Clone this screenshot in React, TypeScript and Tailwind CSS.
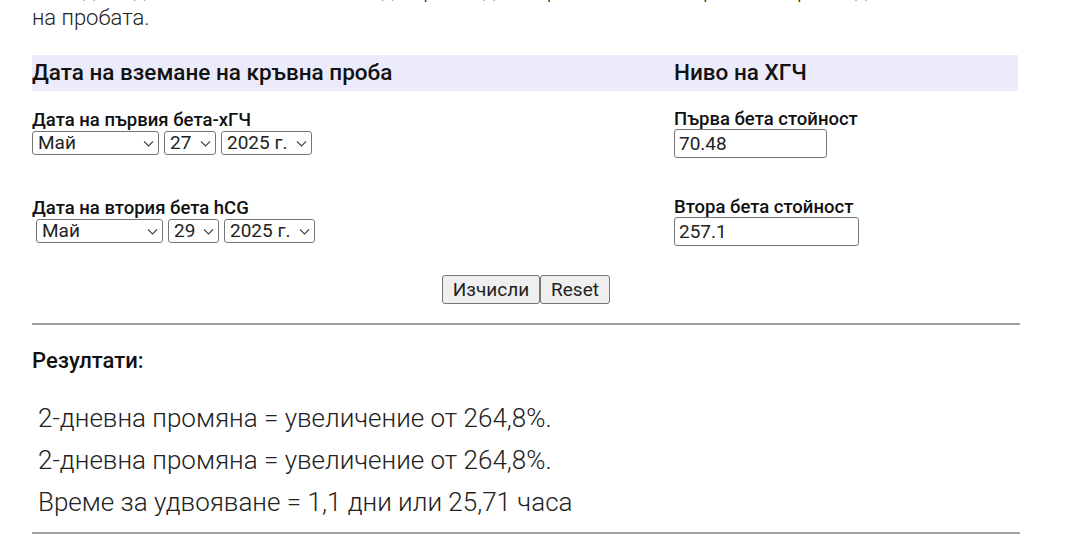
import React from 'react';

const Chevron: React.FC = () => (
  <svg
    className="pointer-events-none absolute right-[5px] top-1/2 -translate-y-1/2"
    width="11"
    height="7"
    viewBox="0 0 11 7"
    fill="none"
  >
    <path d="M1 1l4.5 4.5L10 1" stroke="#444" strokeWidth="1.1" />
  </svg>
);

const DateSelect: React.FC<{ value: string; options: string[]; width: string }> = ({ value, options, width }) => (
  <div className={`relative ${width}`}>
    <select
      defaultValue={value}
      className="w-full h-[24px] appearance-none rounded-[3px] border border-[#767676] bg-white pl-[5px] pr-[18px] text-[19px] leading-[22px] text-[#222]"
    >
      {options.map((o) => (
        <option key={o}>{o}</option>
      ))}
    </select>
    <Chevron />
  </div>
);

const months = ['Януари', 'Февруари', 'Март', 'Април', 'Май', 'Юни', 'Юли', 'Август', 'Септември', 'Октомври', 'Ноември', 'Декември'];
const days = Array.from({ length: 31 }, (_, i) => String(i + 1));
const years = ['2024 г.', '2025 г.', '2026 г.'];

export default function App() {
  return (
    <div className="h-[556px] bg-white font-['Roboto','Liberation_Sans',sans-serif] text-[#111] overflow-hidden">
      <div className="px-8 w-[1052px]">
        {/* intro text, first line cut by the top edge */}
        <p className="-mt-[24px] text-[22px] leading-[28px] font-light text-[#222]">
          <span className="block whitespace-nowrap overflow-hidden">
            Въведете датата на всеки тест, за да проследите промяната на хормона спрямо датата на
          </span>
          <span className="block">на пробата.</span>
        </p>

        {/* header band */}
        <div className="mt-[23px] grid grid-cols-[642px_1fr] bg-[#ebebfb] h-[36px] items-center w-[986px]">
          <div className="text-[22.5px] font-medium">Дата на вземане на кръвна проба</div>
          <div className="text-[22.5px] font-medium">Ниво на ХГЧ</div>
        </div>

        {/* first row */}
        <div className="mt-[18px] grid grid-cols-[642px_1fr]">
          <div>
            <div className="text-[18.5px] font-medium leading-[22px]">Дата на първия бета-хГЧ</div>
            <div className="flex gap-[5px]">
              <DateSelect value="Май" options={months} width="w-[127px]" />
              <DateSelect value="27" options={days} width="w-[52px]" />
              <DateSelect value="2025 г." options={years} width="w-[91px]" />
            </div>
          </div>
          <div>
            <div className="text-[18.5px] font-medium leading-[20px]">Първа бета стойност</div>
            <input
              defaultValue="70.48"
              className="w-[153px] h-[29px] rounded-[3px] border border-[#767676] px-[4px] text-[19px] text-[#222]"
            />
          </div>
        </div>

        {/* second row */}
        <div className="mt-[39px] grid grid-cols-[642px_1fr]">
          <div>
            <div className="text-[18.5px] font-medium leading-[22px]">Дата на втория бета hCG</div>
            <div className="flex gap-[5px] pl-[4px]">
              <DateSelect value="Май" options={months} width="w-[127px]" />
              <DateSelect value="29" options={days} width="w-[51px]" />
              <DateSelect value="2025 г." options={years} width="w-[91px]" />
            </div>
          </div>
          <div>
            <div className="text-[18.5px] font-medium leading-[20px]">Втора бета стойност</div>
            <input
              defaultValue="257.1"
              className="w-[185px] h-[29px] rounded-[3px] border border-[#767676] px-[4px] text-[19px] text-[#222]"
            />
          </div>
        </div>

        {/* buttons */}
        <div className="mt-[29px] flex justify-center w-[988px]">
          <button className="h-[29px] w-[98px] rounded-[3px] border border-[#767676] bg-[#efefef] text-[19px] text-[#222]">
            Изчисли
          </button>
          <button className="h-[29px] w-[70px] rounded-[3px] border border-[#767676] bg-[#efefef] text-[19px] text-[#222]">
            Reset
          </button>
        </div>

        <hr className="mt-[19px] w-[988px] border-t-2 border-[#a0a0a0]" />

        <h3 className="mt-[23px] text-[22px] font-medium leading-[26px]">Резултати:</h3>

        <div className="mt-[23px] pl-[6px] text-[26px] font-light leading-[42px] text-[#222]">
          <p>2-дневна промяна = увеличение от 264,8%.</p>
          <p>2-дневна промяна = увеличение от 264,8%.</p>
          <p>Време за удвояване = 1,1 дни или 25,71 часа</p>
        </div>

        <hr className="mt-[9px] w-[988px] border-t-2 border-[#a0a0a0]" />
      </div>
    </div>
  );
}
